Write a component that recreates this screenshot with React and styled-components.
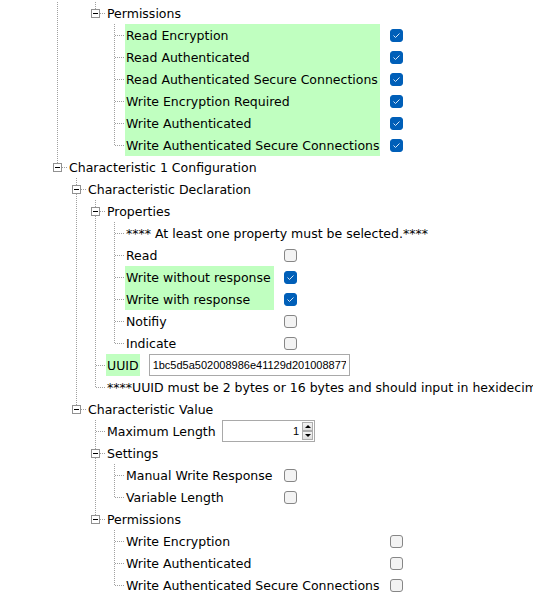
import React from "react";
import styled, { createGlobalStyle, css } from "styled-components";

const GlobalStyle = createGlobalStyle`
  html, body {
    margin: 0;
    background: #fff;
  }
  body {
    overflow: hidden;
    font-family: "DejaVu Sans", Verdana, sans-serif;
    font-size: 12.5px;
    color: #000;
  }
`;

const LINE = "#a0a0a0";
const dotsV = `repeating-linear-gradient(to bottom, ${LINE} 0 1px, transparent 1px 2px)`;
const dotsH = `repeating-linear-gradient(to right, ${LINE} 0 1px, transparent 1px 2px)`;

const Tree = styled.div`
    padding: 2px 0 0 48px;
    white-space: nowrap;
`;

const Row = styled.div`
    display: flex;
    height: 22px;
    align-items: stretch;
`;

const Guide = styled.div`
    flex: 0 0 19px;
    background: ${(p) => (p.$line ? `${dotsV} 9px 0 / 1px 100% no-repeat` : "none")};
`;

const Connector = styled.div`
    flex: 0 0 19px;
    display: flex;
    align-items: flex-start;
    background:
        ${dotsV} 9px 0 / 1px ${(p) => (p.$last ? "11px" : "100%")} no-repeat,
        ${dotsH} 10px 11px / 9px 1px no-repeat;
`;

const Expander = styled.span`
    box-sizing: border-box;
    width: 9px;
    height: 9px;
    margin: 7px 0 0 5px;
    border: 1px solid #919191;
    background: #fff;
    display: flex;
    align-items: center;
    justify-content: center;
    &::after {
        content: "";
        width: 5px;
        height: 1px;
        background: #000;
    }
`;

const Content = styled.div`
    display: flex;
    align-items: center;
    padding-left: 1px;
`;

const Label = styled.span`
    box-sizing: border-box;
    height: 22px;
    line-height: 21px;
    padding: 1px 1px 0;
    width: ${(p) => (p.$width ? `${p.$width}px` : "auto")};
    background: ${(p) => (p.$green ? "#c0ffc0" : "transparent")};
`;

const Box = styled.span`
    box-sizing: border-box;
    width: 13px;
    height: 13px;
    margin-left: 10px;
    border-radius: 3px;
    display: flex;
    align-items: center;
    justify-content: center;
    ${(p) =>
        p.$checked
            ? css`
                  background: #005fb8;
                  border: 1px solid #005fb8;
              `
            : css`
                  background: #f3f3f3;
                  border: 1px solid #868686;
              `}
`;

const TextInput = styled.input`
    box-sizing: border-box;
    width: 201px;
    height: 22px;
    margin-left: 9px;
    padding: 0 3px;
    border: 1px solid #a9a9a9;
    font-family: "Liberation Sans", Arial, sans-serif;
    font-size: 11px;
    color: #000;
    outline: none;
`;

const Spin = styled.div`
    box-sizing: border-box;
    width: 93px;
    height: 22px;
    border: 1px solid #a9a9a9;
    padding: 1px;
    display: flex;
    align-items: stretch;
`;

const SpinValue = styled.span`
    flex: 1;
    text-align: right;
    padding-right: 3px;
    font-family: "Liberation Sans", Arial, sans-serif;
    font-size: 11px;
    line-height: 18px;
`;

const SpinButtons = styled.div`
    width: 11px;
    display: flex;
    flex-direction: column;
`;

const SpinButton = styled.span`
    flex: 1;
    box-sizing: border-box;
    border: 1px solid #adadad;
    background: linear-gradient(#f4f4f4, #dedede);
    display: flex;
    align-items: center;
    justify-content: center;
    &::after {
        content: "";
        border-left: 3px solid transparent;
        border-right: 3px solid transparent;
        ${(p) => (p.$down ? "border-top: 3px solid #000;" : "border-bottom: 3px solid #000;")}
    }
`;

function Checkbox({ checked }) {
    return (
        <Box $checked={checked}>
            {checked && (
                <svg width="11" height="11" viewBox="0 0 11 11">
                    <polyline
                        points="2.5,5.5 4.5,7.5 8.5,3.5"
                        fill="none"
                        stroke="#d6e6f7"
                        strokeWidth="1"
                    />
                </svg>
            )}
        </Box>
    );
}

const item = (label, check, width, green = check) => ({ label, check, width, green });

const tree = [
    {
        hidden: true,
        children: [
            {
                hidden: true,
                children: [
                    {
                        label: "Permissions",
                        children: [
                            item("Read Encryption", true, 255),
                            item("Read Authenticated", true, 255),
                            item("Read Authenticated Secure Connections", true, 255),
                            item("Write Encryption Required", true, 255),
                            item("Write Authenticated", true, 255),
                            item("Write Authenticated Secure Connections", true, 255),
                        ],
                    },
                ],
            },
        ],
    },
    {
        label: "Characteristic 1 Configuration",
        children: [
            {
                label: "Characteristic Declaration",
                children: [
                    {
                        label: "Properties",
                        children: [
                            { label: "**** At least one property must be selected.****" },
                            item("Read", false, 149),
                            item("Write without response", true, 149),
                            item("Write with response", true, 149),
                            item("Notifiy", false, 149),
                            item("Indicate", false, 149),
                        ],
                    },
                    { label: "UUID", green: true, input: "1bc5d5a502008986e41129d201008877" },
                    {
                        label: "****UUID must be 2 bytes or 16 bytes and should input in hexidecimal format****",
                    },
                ],
            },
            {
                label: "Characteristic Value",
                children: [
                    { label: "Maximum Length", width: 116, spin: 1 },
                    {
                        label: "Settings",
                        children: [
                            item("Manual Write Response", false, 149),
                            item("Variable Length", false, 149),
                        ],
                    },
                    {
                        label: "Permissions",
                        children: [
                            item("Write Encryption", false, 255),
                            item("Write Authenticated", false, 255),
                            item("Write Authenticated Secure Connections", false, 255),
                        ],
                    },
                ],
            },
        ],
    },
];

function TreeRow({ node, guides, last }) {
    return (
        <Row>
            {guides.map((g, i) => (
                <Guide key={i} $line={g} />
            ))}
            <Connector $last={last}>{node.children && <Expander />}</Connector>
            <Content>
                <Label $width={node.width} $green={node.green}>
                    {node.label}
                </Label>
                {node.check !== undefined && <Checkbox checked={node.check} />}
                {node.input && <TextInput defaultValue={node.input} />}
                {node.spin !== undefined && (
                    <Spin>
                        <SpinValue>{node.spin}</SpinValue>
                        <SpinButtons>
                            <SpinButton />
                            <SpinButton $down />
                        </SpinButtons>
                    </Spin>
                )}
            </Content>
        </Row>
    );
}

function flatten(nodes, guides, out) {
    nodes.forEach((n, i) => {
        const last = i === nodes.length - 1;
        if (!n.hidden) {
            out.push(<TreeRow key={out.length} node={n} guides={guides} last={last} />);
        }
        if (n.children) flatten(n.children, [...guides, !last], out);
    });
    return out;
}

export default function App() {
    return (
        <>
            <GlobalStyle />
            <Tree>{flatten(tree, [], [])}</Tree>
        </>
    );
}
